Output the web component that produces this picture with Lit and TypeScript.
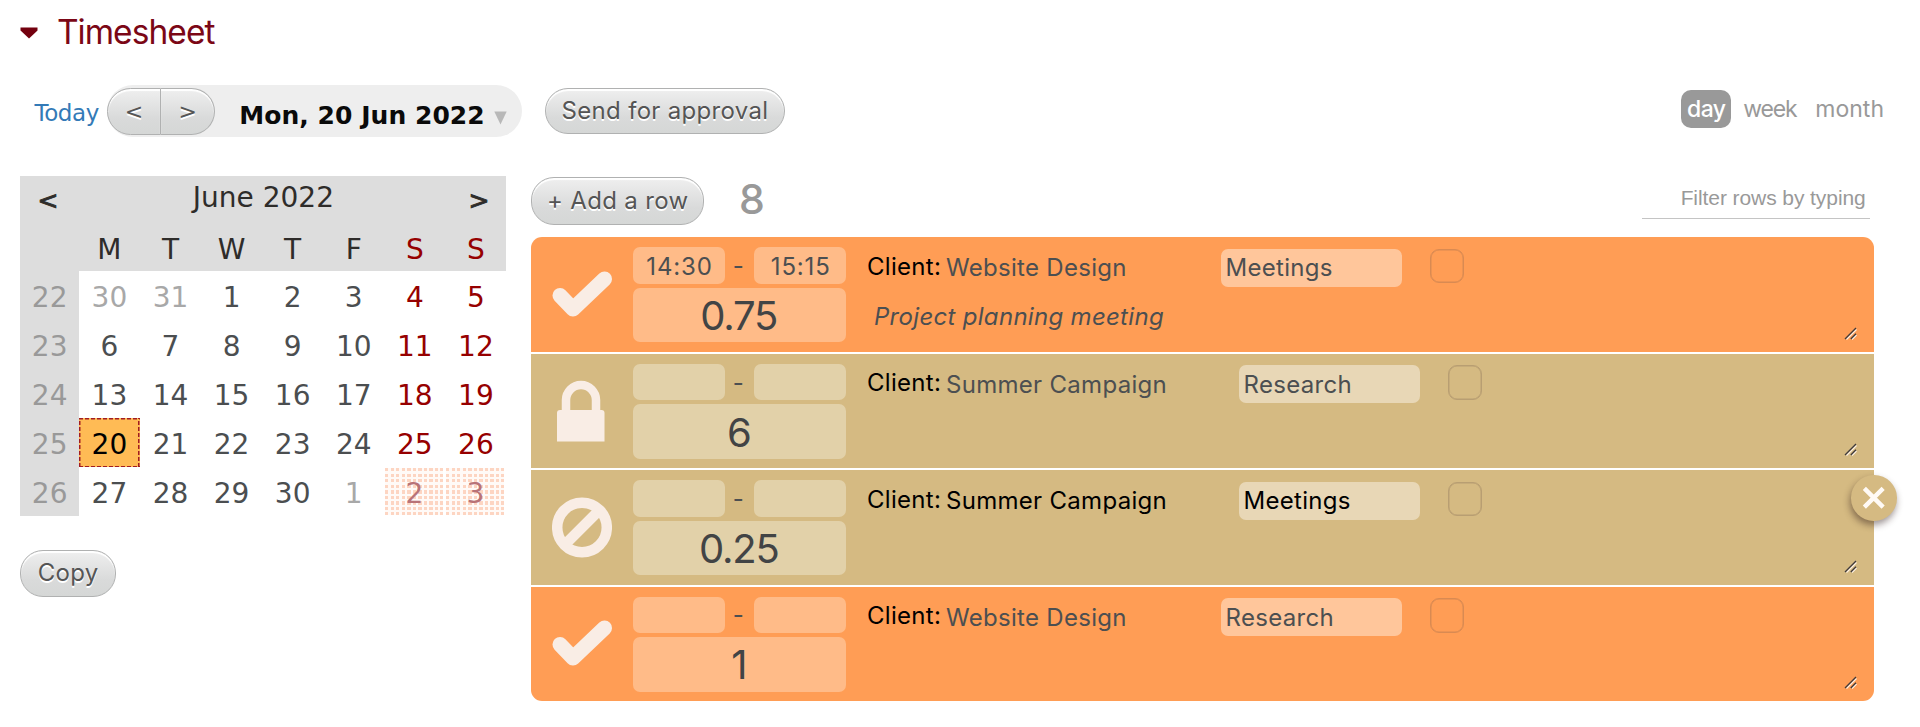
import { LitElement, html, css, svg } from 'lit';
import { customElement, property } from 'lit/decorators.js';
import { classMap } from 'lit/directives/class-map.js';

type Status = 'approved' | 'locked' | 'rejected';

interface Entry {
  status: Status;
  tone: 'orange' | 'sand';
  from: string;
  to: string;
  hours: string;
  project: string;
  task: string;
  note?: string;
  active?: boolean;
}

const ENTRIES: Entry[] = [
  { status: 'approved', tone: 'orange', from: '14:30', to: '15:15', hours: '0.75', project: 'Website Design', task: 'Meetings', note: 'Project planning meeting' },
  { status: 'locked', tone: 'sand', from: '', to: '', hours: '6', project: 'Summer Campaign', task: 'Research' },
  { status: 'rejected', tone: 'sand', from: '', to: '', hours: '0.25', project: 'Summer Campaign', task: 'Meetings', active: true },
  { status: 'approved', tone: 'orange', from: '', to: '', hours: '1', project: 'Website Design', task: 'Research' },
];

const WEEKS: [number, number[]][] = [
  [22, [30, 31, 1, 2, 3, 4, 5]],
  [23, [6, 7, 8, 9, 10, 11, 12]],
  [24, [13, 14, 15, 16, 17, 18, 19]],
  [25, [20, 21, 22, 23, 24, 25, 26]],
  [26, [27, 28, 29, 30, 1, 2, 3]],
];

const ICONS = {
  approved: svg`<path d="M8 31.500 21 45 52.500 15" fill="none" stroke="#f9ede5" stroke-width="15" stroke-linecap="round" stroke-linejoin="round"/>`,
  locked: svg`<path d="M14 32V20a15 15 0 0 1 30 0v12" fill="none" stroke="#f9ede5" stroke-width="8.500"/><path d="M5 33q0-3 3-3h41.500q3 0 3 3v28.500H5z" fill="#f9ede5"/>`,
  rejected: svg`<g fill="none" stroke="#f9ede5" stroke-width="10.500"><circle cx="30" cy="30.500" r="24.800"/><path d="M12.500 48 47.500 13"/></g>`,
};

const BUTTON = css`
  .btn {
    box-sizing: border-box;
    display: flex;
    align-items: center;
    justify-content: center;
    border: 1px solid #b0b1b1;
    border-radius: 23px;
    background: linear-gradient(#efefef, #d9dada 65%, #d5d7d6);
    box-shadow: inset 0 2px 1px #fff;
    color: #555;
    text-shadow: 0 2px 0 #fff;
    font: 24px/28px Inter, sans-serif;
    letter-spacing: 0.32px;
    white-space: nowrap;
  }
`;

@customElement('month-calendar')
class MonthCalendar extends LitElement {
  static styles = css`
    :host {
      display: block;
      width: 486px;
      font: 28px/32px 'DejaVu Sans', Verdana, sans-serif;
      color: #4b4e50;
    }
    .head {
      display: flex;
      justify-content: space-between;
      align-items: center;
      height: 47px;
      box-sizing: border-box;
      padding: 0 17px 3px;
      background: #ddd;
      color: #2e2c2a;
    }
    .arrow {
      font-size: 25px;
      -webkit-text-stroke: 0.9px;
      padding-top: 6px;
    }
    .grid {
      display: grid;
      grid-template-columns: 58.5px repeat(7, 61.08px);
      grid-template-rows: 48px repeat(5, 49.1px);
    }
    .grid > span {
      display: flex;
      align-items: center;
      justify-content: center;
      padding-top: 5px;
      box-sizing: border-box;
    }
    .grid > .dow {
      background: #ddd;
      color: #2e2c2a;
      padding-top: 6px;
    }
    .grid > .week {
      background: #ddd;
      color: #999;
    }
    .grid > .off { color: #a8a8a8; }
    .grid > .weekend { color: #960000; }
    .grid > .today {
      --dash: #a11c22 0 4px, transparent 4px 6px;
      background:
        repeating-linear-gradient(90deg, var(--dash)) 0 0 / 100% 1.5px no-repeat,
        repeating-linear-gradient(90deg, var(--dash)) 0 100% / 100% 1.5px no-repeat,
        repeating-linear-gradient(0deg, var(--dash)) 0 0 / 1.5px 100% no-repeat,
        repeating-linear-gradient(0deg, var(--dash)) 100% 0 / 1.5px 100% no-repeat,
        #ffbb55;
      color: #000;
    }
    .grid > .closed {
      color: #b97377;
      margin: 0.5px 2px 1px 1px;
      background:
        repeating-linear-gradient(90deg, transparent 0 3.3px, #fffaf7 3.3px 5.55px),
        repeating-linear-gradient(180deg, #fdd5c2 0 3.3px, #fffaf7 3.3px 5.55px);
    }
  `;
  render() {
    return html`
      <div class="head"><span class="arrow">&lt;</span><span>June 2022</span><span class="arrow">&gt;</span></div>
      <div class="grid">
        <span class="dow"></span>
        ${'MTWTFSS'.split('').map((d, i) => html`<span class=${classMap({ dow: true, weekend: i > 4 })}>${d}</span>`)}
        ${WEEKS.map(([w, days], r) => html`
          <span class="week">${w}</span>
          ${days.map((d, i) => {
            const off = (r === 0 && d > 20) || (r === 4 && d < 10);
            return html`<span class=${classMap({
              off,
              weekend: i > 4,
              closed: off && i > 4,
              today: r === 3 && d === 20,
            })}>${d}</span>`;
          })}`)}
      </div>`;
  }
}

@customElement('time-entry')
class TimeEntry extends LitElement {
  @property({ attribute: false }) entry!: Entry;
  static styles = css`
    :host { display: block; }
    .row {
      position: relative;
      display: flex;
      align-items: flex-start;
      height: 114.4px;
      font: 24px/30px Inter, sans-serif;
      letter-spacing: 0.3px;
      color: #4c4f51;
    }
    .orange { background: #ff9d55; --field: #ffbb88; --task: #ffc69b; --line: #d98a52; }
    .sand { background: #d5ba82; --field: #e2d1a9; --task: #e8d7b6; --line: #b89e72; }
    .icon { width: 60px; height: 62px; margin: 26.5px 21px 0; }
    .times {
      display: grid;
      grid-template-columns: 92px 29px 92.5px;
      grid-template-rows: 36.5px 54.5px;
      row-gap: 4px;
      margin-top: 10px;
      text-align: center;
    }
    .times > span {
      display: flex;
      align-items: center;
      justify-content: center;
      box-sizing: border-box;
    }
    .field { background: var(--field); border-radius: 7px; }
    .clock { letter-spacing: 0.85px; padding: 2px 0 0 1px; }
    .dash { padding: 1px 2px 0 0; }
    .times > .hours {
      grid-column: 1 / -1;
      font-size: 40px;
      letter-spacing: -1.2px;
      color: #424445;
      padding: 2px 2px 0 0;
    }
    .detail { margin: 11.5px 0 0 20.5px; }
    .line { display: flex; align-items: flex-start; height: 38px; white-space: nowrap; }
    .label { color: #000; width: 79px; padding-top: 3.2px; }
    .project { width: 275.5px; padding-top: 4.5px; }
    .sand .project { width: 293.5px; }
    .task {
      box-sizing: border-box;
      width: 181px;
      height: 38px;
      padding: 4.5px 3.5px 0 4px;
      background: var(--task);
      border-radius: 7px;
    }
    .box {
      box-sizing: border-box;
      width: 34px;
      height: 34.5px;
      margin-left: 28px;
      border: 1px solid var(--line);
      box-shadow: inset 0 0 0 0.5px var(--line);
      border-radius: 9px;
    }
    .note { font-style: italic; margin: 15.5px 0 0 7px; }
    .active .project, .active .task { color: #000; }
    .grip {
      position: absolute;
      right: 17px;
      bottom: 12px;
      width: 13px;
      height: 13px;
    }
    .close {
      position: absolute;
      right: -23px;
      top: 5px;
      width: 45.5px;
      height: 45.5px;
      border-radius: 50%;
      background: #d5ba82;
      box-shadow: -1px 4px 7px rgba(40, 20, 20, 0.45);
    }
  `;
  render() {
    const e = this.entry;
    return html`
      <div class=${classMap({ row: true, [e.tone]: true, active: !!e.active })}>
        <svg class="icon" viewBox="0 0 60 62">${ICONS[e.status]}</svg>
        <div class="times">
          <span class="field clock">${e.from}</span><span class="dash">-</span><span class="field clock">${e.to}</span>
          <span class="field hours">${e.hours}</span>
        </div>
        <div class="detail">
          <div class="line">
            <span class="label">Client:</span><span class="project">${e.project}</span>
            <span class="task">${e.task}</span><span class="box"></span>
          </div>
          ${e.note ? html`<div class="note">${e.note}</div>` : ''}
        </div>
        <svg class="grip" viewBox="0 0 13 13" stroke-width="1.3" fill="none">
          <path d="M2.500 12.500 12.500 2.500M8 12.500l4.500-4.500" stroke="#fff3e6" />
          <path d="M1 12 12 1M6.800 12 12 6.800" stroke="#3e3a3c" />
        </svg>
        ${e.active ? html`<svg class="close" viewBox="0 0 46 46"><path d="m13.500 13.500 19 19m0-19-19 19" stroke="#fffaf5" stroke-width="4.5" /></svg>` : ''}
      </div>`;
  }
}

@customElement('app-root')
class AppRoot extends LitElement {
  static styles = [BUTTON, css`
    :host {
      display: block;
      box-sizing: border-box;
      height: 727px;
      padding-left: 20.4px;
      background: #fff;
      overflow: hidden;
    }
    .title {
      display: flex;
      align-items: center;
      height: 64px;
      margin: 0;
      color: #7b0716;
      font: 400 33.5px/40px Inter, sans-serif;
      letter-spacing: -0.95px;
    }
    .caret { width: 18px; height: 12px; margin: 1px 18.5px 0 0; }
    .bar {
      box-sizing: border-box;
      display: flex;
      align-items: flex-start;
      height: 112px;
      padding-top: 21px;
      white-space: nowrap;
    }
    .link {
      width: 72.6px;
      margin: 10.5px 0 0 14px;
      color: #337ab7;
      font: 23px/34px 'DejaVu Sans', Verdana, sans-serif;
      letter-spacing: -0.4px;
    }
    .date {
      box-sizing: border-box;
      display: flex;
      align-items: flex-start;
      width: 415px;
      height: 52px;
      padding-top: 2.7px;
      border-radius: 26px;
      background: #eee;
      font: bold 25px/34px 'DejaVu Sans', Verdana, sans-serif;
      letter-spacing: 0.04px;
      color: #0a0a0a;
    }
    .step {
      width: 54.2px;
      height: 47px;
      padding-top: 2px;
      font: 22px/28px 'DejaVu Sans', sans-serif;
    }
    .step.prev { border-radius: 24px 0 0 24px; }
    .step.next { border-radius: 0 24px 24px 0; border-left: 0; }
    .day-name { margin: 11px 0 0 24px; }
    .drop { width: 13px; height: 14px; margin: 23px 0 0 9px; }
    .send { width: 240px; height: 46px; margin: 2.7px 0 0 23px; }
    .views {
      display: flex;
      margin: 4.6px 36px 0 auto;
      color: #999;
      font: 23px/38px Inter, sans-serif;
    }
    .view { padding-top: 1.5px; line-height: 37px; }
    .view.on {
      width: 50px;
      text-align: center;
      border-radius: 10px;
      background: #999;
      color: #fff;
      font-weight: 500;
      letter-spacing: -0.6px;
    }
    .view.wk { margin: 0 19px 0 12px; letter-spacing: -1.2px; }
    .body { display: flex; gap: 24.6px; }
    .copy { width: 95.4px; height: 47px; margin-top: 33.5px; }
    .main { width: 1342.7px; padding-top: 1px; }
    .tools { display: flex; height: 60.4px; align-items: flex-start; }
    .add { width: 173.5px; height: 47.5px; }
    .total {
      margin: 1.5px 0 0 34.5px;
      color: #999;
      font: 500 41px/40px Inter, sans-serif;
    }
    .filter {
      box-sizing: border-box;
      width: 228px;
      height: 42px;
      margin: 0 4px 0 auto;
      padding-right: 4px;
      border-bottom: 1px solid #c4c4c4;
      text-align: right;
      color: #999;
      font: 21px/41px 'Liberation Sans', Arial, sans-serif;
      letter-spacing: -0.08px;
    }
    .rows { display: flex; flex-direction: column; gap: 2px; }
    .first { border-radius: 11px 11px 0 0; overflow: hidden; }
    .last { border-radius: 0 0 11px 11px; overflow: hidden; }
  `];
  render() {
    return html`
      <h1 class="title">
        <svg class="caret" viewBox="0 0 18 12"><path d="M.5 .5h17v3l-8.500 8-8.500-8z" fill="#73000f" /></svg>Timesheet
      </h1>
      <div class="bar">
        <span class="link">Today</span>
        <div class="date">
          <span class="btn step prev">&lt;</span><span class="btn step next">&gt;</span>
          <span class="day-name">Mon, 20 Jun 2022</span>
          <svg class="drop" viewBox="0 0 13 14"><path d="M.3 .5h12.400L6.500 13.500z" fill="#b8b8b8" /></svg>
        </div>
        <span class="btn send">Send for approval</span>
        <div class="views"><span class="view on">day</span><span class="view wk">week</span><span class="view">month</span></div>
      </div>
      <div class="body">
        <div>
          <month-calendar></month-calendar>
          <span class="btn copy">Copy</span>
        </div>
        <div class="main">
          <div class="tools">
            <span class="btn add">+ Add a row</span><span class="total">8</span>
            <div class="filter">Filter rows by typing</div>
          </div>
          <div class="rows">
            ${ENTRIES.map((e, i) => html`<time-entry class=${i === 0 ? 'first' : i === ENTRIES.length - 1 ? 'last' : 'mid'} .entry=${e}></time-entry>`)}
          </div>
        </div>
      </div>`;
  }
}
